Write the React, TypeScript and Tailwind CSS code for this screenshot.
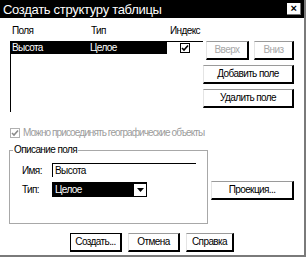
import { useState } from "react";

function Btn({
  children,
  className = "",
  disabled = false,
  isDefault = false,
}: {
  children: React.ReactNode;
  className?: string;
  disabled?: boolean;
  isDefault?: boolean;
}) {
  return (
    <button
      className={`h-[19px] bg-white text-[10px] tracking-[-0.6px] leading-none flex items-center justify-center border-t border-l border-r-2 border-b-2 ${
        isDefault ? "border-black" : "border-t-[#9a9a9a] border-l-[#e4e4e4] border-r-black border-b-black"
      } ${disabled ? "text-[#a8a8a8] border-r-[#777] border-b-[#777]" : "text-black"} ${className}`}
    >
      {children}
    </button>
  );
}

function Check({ color = "black" }: { color?: string }) {
  return (
    <svg width="8" height="8" viewBox="0 0 8 8">
      <path d="M1 4 L3 6 L7 1.5" stroke={color} strokeWidth="1.6" fill="none" />
    </svg>
  );
}

export default function App() {
  const [geo] = useState(true);

  return (
    <div className="w-[306px] h-[257px] bg-white flex flex-col font-['Liberation_Sans',Arial,sans-serif] text-[10px] tracking-[-0.6px] text-black border-r-2 border-b-2 border-[#7a7a7a] overflow-hidden">
      {/* title bar */}
      <div className="h-[18px] bg-black flex items-center justify-between pl-[3px] pr-[3px] shrink-0">
        <span className="text-white text-[13px] tracking-[-0.3px] leading-none">Создать структуру таблицы</span>
        <span className="w-[14px] h-[12px] bg-white border-r border-b border-[#777] flex items-center justify-center text-black text-[11px] font-bold leading-none">
          ×
        </span>
      </div>

      <div className="flex-1 flex flex-col px-[10px]">
        {/* fields list + side buttons */}
        <div className="flex mt-[5px]">
          <div className="w-[195px] flex flex-col">
            <div className="flex h-[13px] items-end leading-none">
              <span className="w-[81px] pl-[2px]">Поля</span>
              <span className="w-[79px]">Тип</span>
              <span>Индекс</span>
            </div>
            <div className="mt-[5px] h-[71px] border-t border-l border-black">
              <div className="flex h-[12px] items-center">
                <div className="w-[156px] h-full bg-black text-white flex items-center leading-none">
                  <span className="w-[79px] pl-[1px]">Высота</span>
                  <span>Целое</span>
                </div>
                <div className="flex-1 flex justify-center">
                  <div className="w-[10px] h-[10px] border border-black bg-white flex items-center justify-center">
                    <Check />
                  </div>
                </div>
              </div>
            </div>
          </div>

          <div className="flex-1 flex flex-col items-end pt-[18px] gap-[5px]">
            <div className="flex gap-[5px]">
              <Btn disabled className="w-[43px]">Вверх</Btn>
              <Btn disabled className="w-[40px]">Вниз</Btn>
            </div>
            <Btn className="w-[91px]">Добавить поле</Btn>
            <Btn className="w-[91px]">Удалить поле</Btn>
          </div>
        </div>

        {/* geo checkbox */}
        <div className="flex items-center gap-[3px] mt-[16px] text-[#9c9c9c] leading-none">
          <div className="w-[10px] h-[10px] border border-[#b0b0b0] flex items-center justify-center">
            {geo && <Check color="#8a8a8a" />}
          </div>
          <span className="tracking-[-0.9px]">Можно присоединять географические объекты</span>
        </div>

        {/* field description */}
        <div className="flex mt-[12px]">
          <div className="w-[199px] h-[74px] border border-[#a8a8a8] ml-[-1px] flex flex-col pl-[12px]">
            <span className="bg-white w-fit px-[1px] -ml-[9px] -mt-[6px] leading-none">Описание поля</span>
            <div className="flex items-center h-[14px] mt-[8px]">
              <span className="w-[30px]">Имя:</span>
              <div className="w-[144px] h-[14px] border-t border-l border-black flex items-center pl-[2px] leading-none">
                Высота
              </div>
            </div>
            <div className="flex items-center h-[15px] mt-[5px]">
              <span className="w-[30px]">Тип:</span>
              <div className="w-[95px] h-[15px] border-t border-l border-black bg-black flex items-center leading-none">
                <span className="flex-1 text-white pl-[2px]">Целое</span>
                <span className="w-[13px] h-[13px] bg-white border-r border-b border-black flex items-center justify-center">
                  <svg width="7" height="4" viewBox="0 0 7 4">
                    <path d="M0 0 H7 L3.5 4 Z" fill="black" />
                  </svg>
                </span>
              </div>
            </div>
          </div>
          <div className="flex-1 flex justify-end items-start pt-[31px]">
            <Btn className="w-[83px]">Проекция...</Btn>
          </div>
        </div>

        {/* bottom buttons */}
        <div className="flex gap-[6px] mt-[9px] pl-[60px]">
          <Btn isDefault className="w-[52px]">Создать...</Btn>
          <Btn className="w-[52px]">Отмена</Btn>
          <Btn className="w-[48px]">Справка</Btn>
        </div>
      </div>
    </div>
  );
}
